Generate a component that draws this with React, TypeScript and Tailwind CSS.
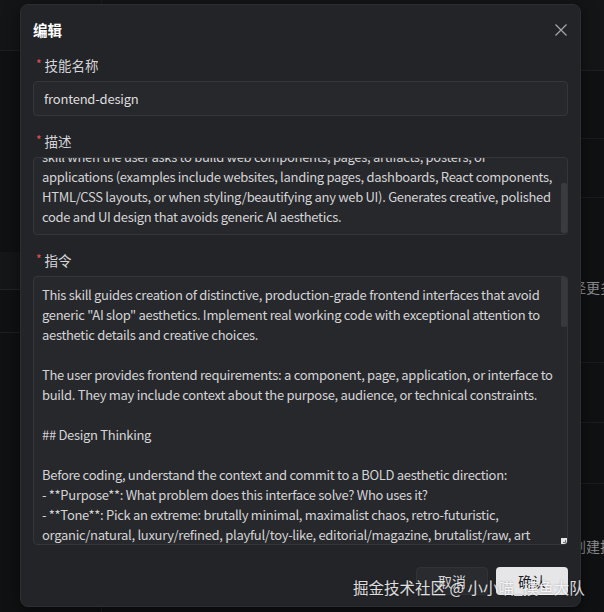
import React from "react";

const FONT = '"Noto Sans CJK SC", "Noto Sans", sans-serif';

const descLines = [
  "Create distinctive, production-grade frontend interfaces with high design quality. Use this",
  "skill when the user asks to build web components, pages, artifacts, posters, or",
  "applications (examples include websites, landing pages, dashboards, React components,",
  "HTML/CSS layouts, or when styling/beautifying any web UI). Generates creative, polished",
  "code and UI design that avoids generic AI aesthetics.",
];

const instrLines = [
  "This skill guides creation of distinctive, production-grade frontend interfaces that avoid",
  'generic "AI slop" aesthetics. Implement real working code with exceptional attention to',
  "aesthetic details and creative choices.",
  "",
  "The user provides frontend requirements: a component, page, application, or interface to",
  "build. They may include context about the purpose, audience, or technical constraints.",
  "",
  "## Design Thinking",
  "",
  "Before coding, understand the context and commit to a BOLD aesthetic direction:",
  "- **Purpose**: What problem does this interface solve? Who uses it?",
  "- **Tone**: Pick an extreme: brutally minimal, maximalist chaos, retro-futuristic,",
  "organic/natural, luxury/refined, playful/toy-like, editorial/magazine, brutalist/raw, art",
  "deco/geometric, soft/pastel, industrial/utilitarian, etc.",
];

function Label({ text }: { text: string }) {
  return (
    <div className="flex h-[22px] items-center text-[13.5px] text-[#d6d6d8]">
      <span className="ml-[3px] mr-[3px] mt-[-3px] text-[12px] leading-none text-[#e5505a]">*</span>
      <span>{text}</span>
    </div>
  );
}

function Lines({ lines }: { lines: string[] }) {
  return (
    <>
      {lines.map((l, i) => (
        <div key={i} className="h-[20px] whitespace-pre leading-[20px]">
          {l === "" ? "\u00a0" : l}
        </div>
      ))}
    </>
  );
}

function ResizeGrip() {
  return (
    <div className="flex h-[6px] w-[6px] items-center justify-center bg-[#e4e4e6]">
      <svg width="6" height="6" viewBox="0 0 6 6">
        <path d="M4.5 2 L4.5 4.5 L2 4.5" stroke="#555" strokeWidth="0.8" fill="none" />
      </svg>
    </div>
  );
}

function Background() {
  return (
    <div className="flex h-full w-full bg-[#101113]">
      {/* sidebar */}
      <div className="flex w-[102px] shrink-0 flex-col border-r border-[#1c1d20]">
        <div className="h-[51px] border-b border-[#1e1f22] bg-[#141517]" />
        <div className="h-[201px]" />
        <div className="h-[38px] border-b border-[#222326] bg-[#151618]" />
        <div className="h-[43px] border-b border-[#1e1f22]" />
      </div>
      {/* main list */}
      <div className="flex flex-1 flex-col text-[14px] text-[#8c8d91]">
        <div className="h-[71px] border-b border-[#1f2023] bg-[#141517]" />
        <div className="h-[68px] border-b border-[#1c1d20]" />
        <div className="h-[59px] border-b border-[#1c1d20]" />
        <div className="flex h-[165px] flex-col border-b border-[#1c1d20]">
          <div className="mt-[79px] ml-[456px] whitespace-nowrap leading-[20px]">已经更多</div>
        </div>
        <div className="h-[60px] border-b border-[#1c1d20]" />
        <div className="h-[61px] border-b border-[#1c1d20]" />
        <div className="flex flex-1 flex-col">
          <div className="mt-[52px] ml-[470px] whitespace-nowrap leading-[20px]">创建技能</div>
        </div>
      </div>
    </div>
  );
}

export default function App() {
  return (
    <div
      className="relative h-[612px] w-[604px] overflow-hidden"
      style={{ fontFamily: FONT }}
    >
      <Background />

      {/* edit dialog */}
      <div className="absolute left-[20px] top-[4px] flex h-[603px] w-[561px] flex-col rounded-[8px] border border-[#2d2e32] bg-[#232428] px-[12px] shadow-[0_4px_16px_rgba(0,0,0,0.5)]">
        <div className="flex h-[49px] items-center justify-between">
          <span className="text-[14.5px] font-bold text-white">编辑</span>
          <svg width="12" height="12" viewBox="0 0 12 12" className="mr-[1px]">
            <path d="M0.5 0.5 L11.5 11.5 M11.5 0.5 L0.5 11.5" stroke="#a6a7ab" strokeWidth="1.2" />
          </svg>
        </div>

        <Label text="技能名称" />
        <div className="mt-[5px] flex h-[35px] items-center rounded-[4px] border border-[#35363a] bg-[#27282c] px-[10px] text-[13px] tracking-[-0.2px] text-[#dcdcde]">
          frontend-design
        </div>

        <div className="mt-[14px]">
          <Label text="描述" />
        </div>
        <div className="mt-[5px] flex h-[78px] overflow-hidden rounded-[4px] border border-[#35363a] bg-[#27282c] text-[13px] tracking-[-0.3px] text-[#d4d4d6]">
          <div className="flex-1 overflow-hidden pl-[8px]">
            <div className="mt-[-39px] pt-[8px]">
              <Lines lines={descLines} />
            </div>
          </div>
          <div className="flex w-[6px] flex-col">
            <div className="mt-[25px] h-[50px] rounded-[2px] bg-[#3a3b3f]" />
          </div>
        </div>

        <div className="mt-[14px]">
          <Label text="指令" />
        </div>
        <div className="mt-[5px] flex h-[269px] overflow-hidden rounded-[4px] border border-[#35363a] bg-[#27282c] text-[13px] tracking-[-0.3px] text-[#d4d4d6]">
          <div className="flex-1 overflow-hidden pl-[8px] pt-[8px]">
            <Lines lines={instrLines} />
          </div>
          <div className="flex w-[6px] flex-col">
            <div className="h-[50px] rounded-[2px] bg-[#38393d]" />
            <div className="flex-1" />
            <ResizeGrip />
          </div>
        </div>

        <div className="mt-[22px] flex justify-end gap-[8px]">
          <button className="flex h-[28px] w-[72px] items-center justify-center rounded-[4px] border border-[#323337] bg-[#2a2b2f] text-[14px] text-[#d4d4d6]">
            取消
          </button>
          <button className="flex h-[28px] w-[72px] items-center justify-center rounded-[4px] bg-[#e6e6e8] text-[14px] text-[#1b1b1d]">
            确认
          </button>
        </div>
      </div>

      {/* site watermark */}
      <div className="absolute left-[353px] top-[576px] whitespace-nowrap text-[15.5px] leading-[22px] text-white/85 [text-shadow:0_0_2px_rgba(0,0,0,0.35)]">
        掘金技术社区 @ 小小喵_摸鱼大队
      </div>
    </div>
  );
}
